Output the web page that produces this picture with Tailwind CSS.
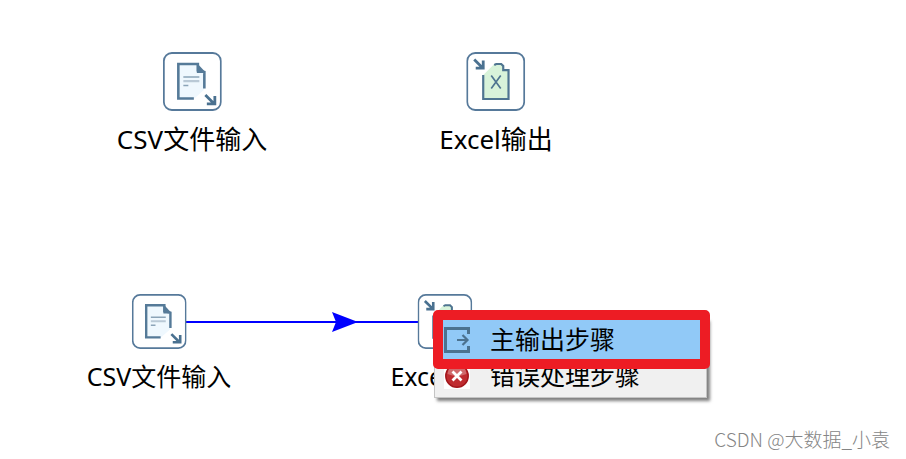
<!DOCTYPE html>
<html lang="zh-CN">
<head>
<meta charset="utf-8">
<meta name="viewport" content="width=device-width, initial-scale=1">
<title>转换画布</title>
<script src="https://cdn.jsdelivr.net/npm/@tailwindcss/browser@4"></script>
</head>
<body class="bg-white text-black font-['Noto_Sans','Noto_Sans_CJK_SC',sans-serif]">
<svg class="hidden" aria-hidden="true">
  <symbol id="csv" viewBox="0 0 59 59">
    <rect x="1" y="1" width="57" height="57" rx="8" fill="#fff" stroke="#56799a" stroke-width="1.8"/>
    <path d="M15 11.500H35V19H41V38L31 47H15Z" fill="#eff8fe"/>
    <path d="M31 46.500H15.500V12H35V18.500L41.500 20V36.500" fill="none" stroke="#557a98" stroke-width="2.600"/>
    <path d="M35 12L41.500 19V21H34V12Z" fill="#557a98"/>
    <path d="M20.500 25H36.500M20.500 33.500H25.500" stroke="#8ba4b8" stroke-width="1.500"/>
    <path d="M20.500 29.200H36.500" stroke="#b9c9d6" stroke-width="2.200"/>
    <path d="M42.500 43L51 51.500M52 44V51.800H44" fill="none" stroke="#4a7190" stroke-width="2.800"/>
  </symbol>
  <symbol id="excel" viewBox="0 0 59 59">
    <rect x="1" y="1" width="57" height="57" rx="8" fill="#fff" stroke="#56799a" stroke-width="1.8"/>
    <path d="M17 23L28 12H36V18H42.500V47H17Z" fill="#d8f3da"/>
    <path d="M28 13L30 12H35L37 14V18.200H42.300V47H17V23" fill="none" stroke="#4f7591" stroke-width="2.200"/>
    <path d="M25 23.500L34.500 36.500M34.500 23.500L25 36.500" stroke="#4f7591" stroke-width="1.700"/>
    <path d="M8 7.500L16 15.500M17 8.500V16.200H9.500" fill="none" stroke="#4a7190" stroke-width="2.800"/>
  </symbol>
</svg>
<main class="relative min-h-screen overflow-hidden">
  <svg class="absolute left-[186px] top-[310px] w-[232px] h-6" viewBox="0 0 232 24" aria-hidden="true">
    <path d="M0 12H232" stroke="#00f" stroke-width="1.8"/>
    <path d="M146 2L172 12L146 22L150 12Z" fill="#00f"/>
  </svg>

  <figure class="absolute left-[192px] top-[52px] flex -translate-x-1/2 flex-col items-center gap-3 whitespace-nowrap">
    <svg class="size-[59px]" aria-hidden="true"><use href="#csv"/></svg>
    <figcaption class="text-[26px] leading-8">CSV文件输入</figcaption>
  </figure>
  <figure class="absolute left-[496px] top-[52px] flex -translate-x-1/2 flex-col items-center gap-3 whitespace-nowrap">
    <svg class="size-[59px]" aria-hidden="true"><use href="#excel"/></svg>
    <figcaption class="text-[26px] leading-8">Excel输出</figcaption>
  </figure>
  <figure class="absolute left-[159px] top-[294px] flex -translate-x-1/2 flex-col items-center gap-[11px] whitespace-nowrap">
    <svg class="size-[55px]" aria-hidden="true"><use href="#csv"/></svg>
    <figcaption class="text-[25px] leading-8">CSV文件输入</figcaption>
  </figure>
  <figure class="absolute left-[445px] top-[294px] flex -translate-x-1/2 flex-col items-center gap-[11px] whitespace-nowrap">
    <svg class="size-[55px]" aria-hidden="true"><use href="#excel"/></svg>
    <figcaption class="text-[25px] leading-8">Excel输出</figcaption>
  </figure>

  <div role="menu" class="absolute left-[434px] top-[318px] flex w-[273px] flex-col border border-[#c4c4c4] bg-[#f0f0f0] p-px text-[25px] shadow-[3px_3px_3px_#00000080]">
    <button role="menuitem" class="flex h-10 items-center gap-5 bg-[#91c9f7] pl-2 text-left">
      <svg class="size-[26px]" viewBox="0 0 26 26" fill="none" stroke="#4b7290" aria-hidden="true">
        <path d="M24.500 7V1.500H1.500V24.500H24.500V19" stroke-width="3"/>
        <path d="M13 13H23M18.500 8L23.500 13L18.500 18" stroke-width="2.200"/>
      </svg>
      <span>主输出步骤</span>
    </button>
    <button role="menuitem" class="flex h-9 items-center gap-5 pb-1 pl-2 text-left">
      <svg class="size-[26px]" viewBox="0 0 26 26" aria-hidden="true">
        <path d="M0 0H26V26H0Z" fill="#fff"/>
        <circle cx="13" cy="13" r="11.200" fill="#bf2c30" stroke="#a3171c" stroke-width="1.500"/>
        <path d="M3.500 11a9.500 9.500 0 0 1 19 0Q13 15 3.500 11Z" fill="#d06a6c"/>
        <path d="M8.500 8.500L17.500 17.500M17.500 8.500L8.500 17.500" stroke="#fff" stroke-width="2.800"/>
      </svg>
      <span>错误处理步骤</span>
    </button>
  </div>
  <div class="pointer-events-none absolute left-[433px] top-[310px] h-[59px] w-[277px] rounded-[5px] border-10 border-[#ed1c24]"></div>

  <p class="absolute right-4 bottom-1 text-[19px] leading-8 whitespace-nowrap font-['Noto_Sans_CJK_SC',sans-serif] font-light text-[#858585]">CSDN @大数据_小袁</p>
</main>
</body>
</html>
